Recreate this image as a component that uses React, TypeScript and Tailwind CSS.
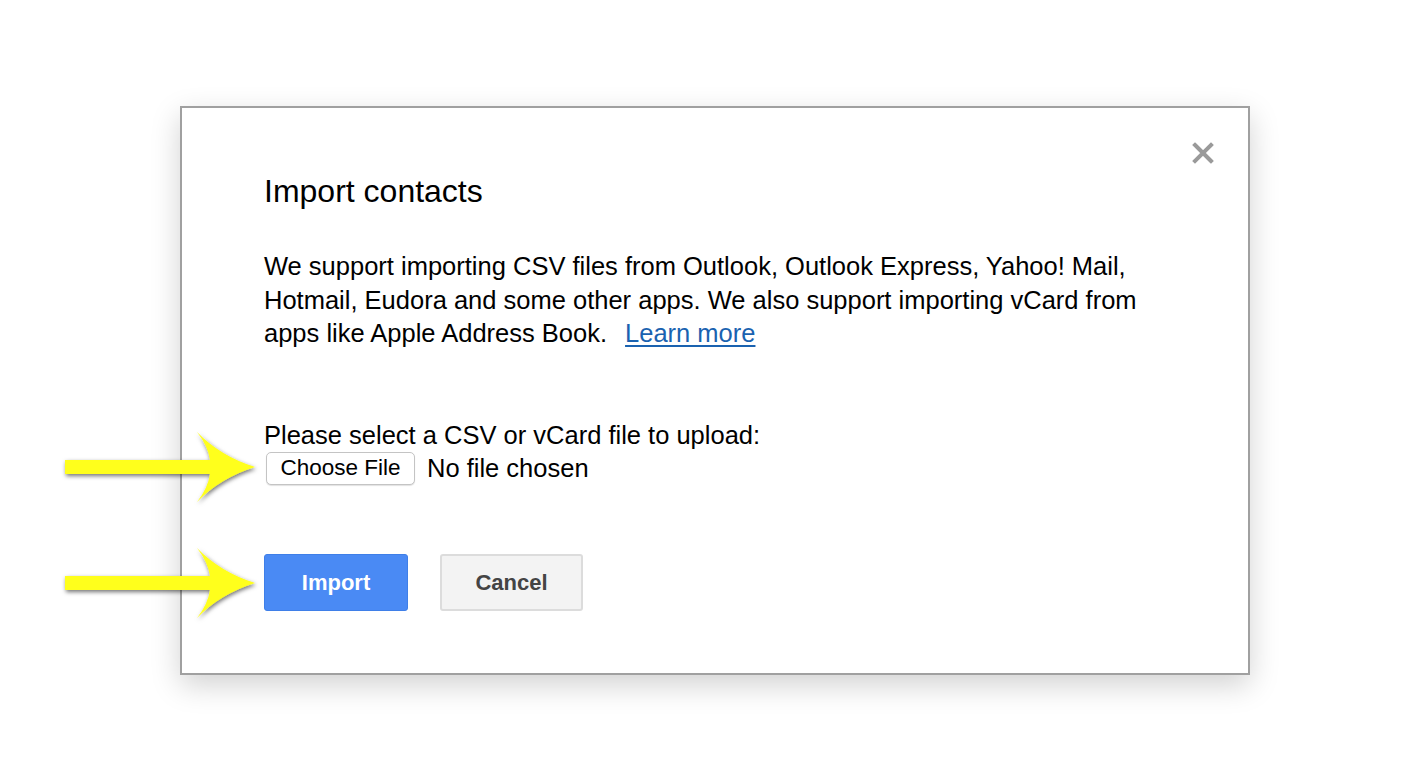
import React from "react";

const YellowArrow: React.FC<{ className: string }> = ({ className }) => (
  <svg className={className} width="210" height="90" viewBox="0 0 210 90">
    <defs>
      <filter id="arrowShadow" x="-10%" y="-20%" width="120%" height="140%">
        <feDropShadow dx="1" dy="2" stdDeviation="2.2" floodColor="#000" floodOpacity="0.55" />
      </filter>
    </defs>
    <path
      d="M8,38 L153,38 Q151,24 140,10 Q163,34 198,45 Q163,56 140,80 Q151,66 153,52 L8,52 Z"
      fill="#ffff1a"
      filter="url(#arrowShadow)"
    />
  </svg>
);

const ImportDialog: React.FC = () => {
  return (
    <div className="relative w-[1070px] h-[569px] bg-white border-2 border-[#a0a0a0] shadow-[0_10px_28px_rgba(0,0,0,0.18)] pl-[82px] pr-[84px] pt-[65px]">
      {/* close */}
      <button className="absolute right-[33px] top-[33px] w-[24px] h-[24px] flex items-center justify-center">
        <svg width="22" height="22" viewBox="0 0 22 22">
          <path d="M3,3 L19,19 M19,3 L3,19" stroke="#9a9a9a" strokeWidth="4" strokeLinecap="square" />
        </svg>
      </button>

      <h1 className="text-[32px] leading-[37px] text-black">Import contacts</h1>

      <p className="mt-[40px] w-[900px] text-[25.5px] leading-[33.5px] text-black">
        We support importing CSV files from Outlook, Outlook Express, Yahoo! Mail, Hotmail, Eudora and some other
        apps. We also support importing vCard from apps like Apple Address Book.
        <a href="#" className="ml-[18px] text-[#1a62b0] underline underline-offset-[3px] decoration-[2px]">
          Learn more
        </a>
      </p>

      <div className="mt-[68px] text-[25.5px] leading-[33px] text-black">
        Please select a CSV or vCard file to upload:
      </div>
      <div className="flex items-center">
        <button className="ml-[2px] h-[33px] w-[149px] rounded-[5px] border border-[#c4c4c4] bg-white text-[22.5px] leading-none text-black shadow-[0_1px_1px_rgba(0,0,0,0.12)]">
          Choose File
        </button>
        <span className="ml-[12px] text-[25.5px] leading-[33px] text-black">No file chosen</span>
      </div>

      <div className="mt-[69px] flex items-center gap-[32px]">
        <button className="h-[57px] w-[144px] rounded-[3px] border border-[#3f7fe8] bg-[#4a8af4] text-[22px] font-bold text-white">
          Import
        </button>
        <button className="h-[57px] w-[143px] rounded-[3px] border-2 border-[#dcdcdc] bg-[#f3f3f3] text-[22px] font-bold text-[#444]">
          Cancel
        </button>
      </div>
    </div>
  );
};

export default function App() {
  return (
    <div
      className="relative w-[1422px] h-[778px] bg-white pt-[106px] pl-[180px] overflow-hidden"
      style={{ fontFamily: '"Liberation Sans", Arial, sans-serif' }}
    >
      <ImportDialog />
      <YellowArrow className="absolute left-[57px] top-[422px]" />
      <YellowArrow className="absolute left-[57px] top-[538px]" />
    </div>
  );
}
